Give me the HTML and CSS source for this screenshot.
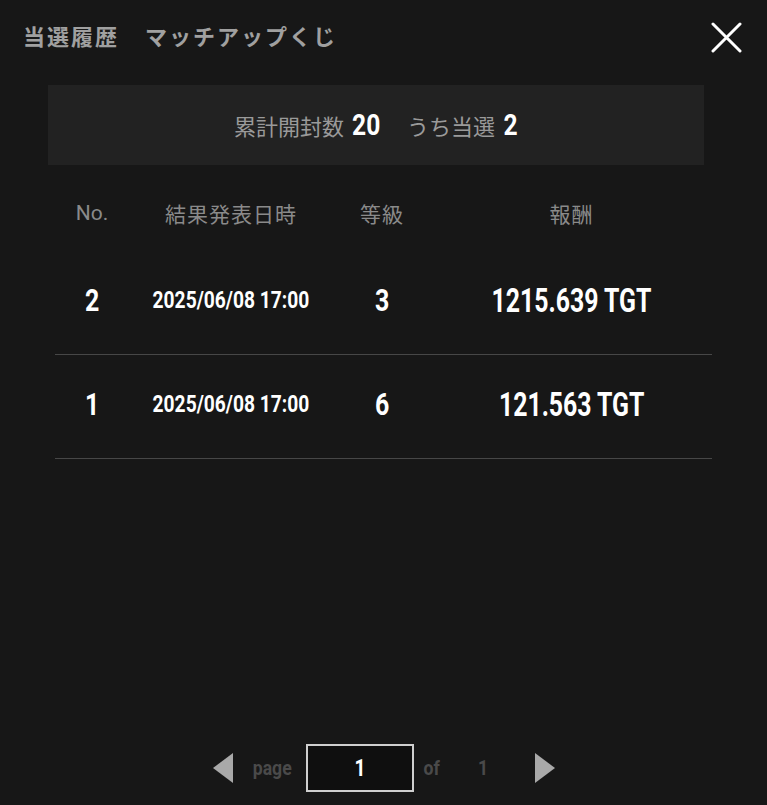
FILE: index.html
```html
<!DOCTYPE html>
<html lang="ja">
<head>
<meta charset="utf-8">
<title>当選履歴</title>
<link rel="stylesheet" href="styles.css">
</head>
<body>
<div class="modal">
  <header class="head">
    <div class="titles">
      <span class="title">当選履歴</span>
      <span class="title">マッチアップくじ</span>
    </div>
    <button class="close" aria-label="close">
      <svg width="31" height="31" viewBox="0 0 31 31"><path d="M2 2 L29 29 M29 2 L2 29" stroke="#ffffff" stroke-width="3" stroke-linecap="round" fill="none"/></svg>
    </button>
  </header>

  <section class="summary">
    <span class="label">累計開封数</span>
    <span class="cell c-total"><span class="num sq big">20</span></span>
    <span class="label second">うち当選</span>
    <span class="cell c-win"><span class="num sq big">2</span></span>
  </section>

  <section class="table">
    <div class="thead">
      <div class="no">No.</div>
      <div>結果発表日時</div>
      <div>等級</div>
      <div>報酬</div>
    </div>
    <div class="row">
      <div class="cell"><span class="num sq n">2</span></div>
      <div class="cell"><span class="num sq d">2025/06/08 17:00</span></div>
      <div class="cell"><span class="num sq n">3</span></div>
      <div class="cell"><span class="num sq r">1215.639 TGT</span></div>
    </div>
    <div class="row">
      <div class="cell"><span class="num sq n">1</span></div>
      <div class="cell"><span class="num sq d">2025/06/08 17:00</span></div>
      <div class="cell"><span class="num sq n">6</span></div>
      <div class="cell"><span class="num sq r">121.563 TGT</span></div>
    </div>
  </section>

  <nav class="pager">
    <svg class="tri prev" width="20" height="30" viewBox="0 0 20 30"><polygon points="20,0 20,30 0,15" fill="#a9a9a9"/></svg>
    <span class="cell p-page"><span class="num sq dim">page</span></span>
    <div class="pagebox"><span class="num sq cur">1</span></div>
    <span class="cell p-of"><span class="num sq dim">of</span></span>
    <span class="cell p-total"><span class="num sq dim">1</span></span>
    <svg class="tri next" width="20" height="30" viewBox="0 0 20 30"><polygon points="0,0 0,30 20,15" fill="#a9a9a9"/></svg>
  </nav>
</div>
</body>
</html>
```

FILE: styles.css
```css
html, body {
  margin: 0;
  padding: 0;
  background: #171717;
}
body {
  font-family: "Noto Sans CJK JP", "Noto Sans", sans-serif;
  color: #ffffff;
}
.modal {
  height: 805px;
  display: flex;
  flex-direction: column;
  box-sizing: border-box;
}
.head {
  display: flex;
  justify-content: space-between;
  align-items: center;
  padding: 22px 25px 0 23px;
  height: 31px;
}
.titles {
  display: flex;
  gap: 26px;
  margin-top: -5px;
}
.title {
  font-size: 22px;
  font-weight: 700;
  color: #a0a0a0;
  letter-spacing: 2px;
  line-height: 30px;
}
.close {
  background: none;
  border: 0;
  padding: 0;
  width: 31px;
  height: 31px;
  display: block;
  cursor: pointer;
}
.close svg { display: block; }

/* condensed numeric type */
.num {
  font-family: "Roboto", "Noto Sans", sans-serif;
  font-weight: 700;
}
.cell {
  display: flex;
  justify-content: center;
  align-items: center;
}
.sq {
  display: inline-block;
  white-space: nowrap;
}

.summary {
  margin: 32px 63px 0 48px;
  height: 80px;
  background: #222222;
  display: flex;
  justify-content: center;
  align-items: center;
}
.summary .label {
  font-size: 22px;
  color: #9a9a9a;
  line-height: 30px;
}
.summary .label.second { margin-left: 26px; }
.summary .big {
  font-size: 30px;
  line-height: 30px;
  color: #ffffff;
  transform: scaleX(0.82);
}
.c-total { width: 29px; margin-left: 8px; }
.c-win { width: 14px; margin-left: 9px; }

.table {
  margin: 0 55px;
}
.thead, .row {
  display: grid;
  grid-template-columns: 74px 204px 98px 1fr;
  align-items: center;
  text-align: center;
}
.thead {
  height: 76px;
  padding-top: 10px;
  font-size: 21px;
  color: #8a8a8a;
  letter-spacing: 1px;
}
.thead .no {
  font-family: "Roboto", "Noto Sans", sans-serif;
  letter-spacing: 0;
}
.row {
  height: 98px;
  padding-bottom: 5px;
  border-bottom: 1px solid #474747;
}
.row .n { font-size: 32px; transform: scaleX(0.78); }
.row .d { font-size: 24px; transform: scaleX(0.8); }
.row .r { font-size: 34px; transform: scaleX(0.73); }

.pager {
  margin-top: auto;
  margin-bottom: 13px;
  display: flex;
  align-items: center;
  justify-content: center;
  height: 48px;
}
.tri { display: block; }
.dim {
  color: #4a4a4a;
  font-size: 21px;
  transform: scaleX(0.84);
}
.p-page { width: 39px; margin-left: 20px; }
.pagebox {
  margin-left: 14px;
  width: 104px;
  height: 44px;
  border: 2px solid #cfcfcf;
  background: #0f0f0f;
  display: flex;
  align-items: center;
  justify-content: center;
}
.cur { font-size: 24px; color: #ffffff; transform: scaleX(0.8); }
.p-of { width: 16px; margin-left: 10px; }
.p-total { width: 8px; margin-left: 40px; }
.next { margin-left: 47px; }
```
